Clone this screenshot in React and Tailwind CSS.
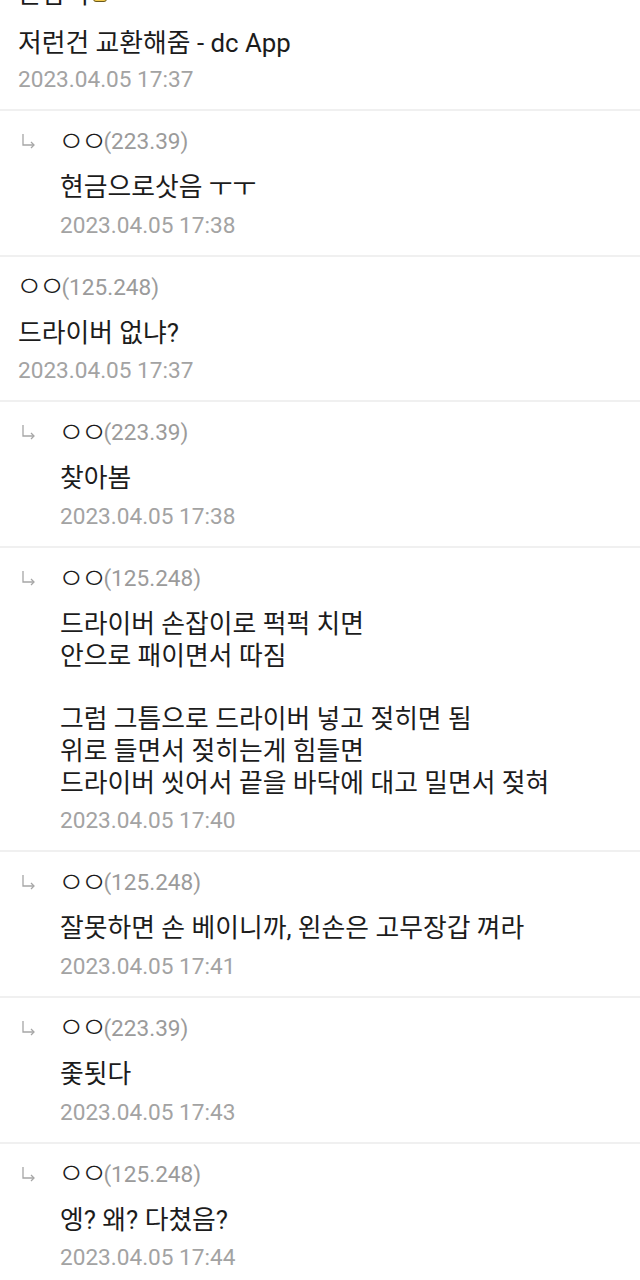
const comments = [
  { reply: true, name: "ㅇㅇ", ip: "223.39", lines: ["현금으로삿음 ㅜㅜ"], date: "2023.04.05 17:38" },
  { reply: false, name: "ㅇㅇ", ip: "125.248", lines: ["드라이버 없냐?"], date: "2023.04.05 17:37" },
  { reply: true, name: "ㅇㅇ", ip: "223.39", lines: ["찾아봄"], date: "2023.04.05 17:38" },
  {
    reply: true,
    name: "ㅇㅇ",
    ip: "125.248",
    lines: [
      "드라이버 손잡이로 퍽퍽 치면",
      "안으로 패이면서 따짐",
      "",
      "그럼 그틈으로 드라이버 넣고 젖히면 됨",
      "위로 들면서 젖히는게 힘들면",
      "드라이버 씻어서 끝을 바닥에 대고 밀면서 젖혀",
    ],
    date: "2023.04.05 17:40",
  },
  { reply: true, name: "ㅇㅇ", ip: "125.248", lines: ["잘못하면 손 베이니까, 왼손은 고무장갑 껴라"], date: "2023.04.05 17:41" },
  { reply: true, name: "ㅇㅇ", ip: "223.39", lines: ["좇됫다"], date: "2023.04.05 17:43" },
  { reply: true, name: "ㅇㅇ", ip: "125.248", lines: ["엥? 왜? 다쳤음?"], date: "2023.04.05 17:44" },
];

function ReplyArrow() {
  return (
    <svg width="15" height="15" viewBox="0 0 15 15" fill="none" stroke="#a6a6a6" strokeWidth="1.3">
      <path d="M2 0v11h11" />
      <path d="M10 8l3 3-3 3" />
    </svg>
  );
}

function Comment({ c }) {
  return (
    <div className="border-b-2 border-[#f0f0f0] pt-[15px] pb-[13px] flex">
      {c.reply && (
        <div className="w-[60px] shrink-0 pl-[21px] pt-[8px]">
          <ReplyArrow />
        </div>
      )}
      <div className={c.reply ? "" : "pl-[18px]"}>
        <div className="leading-8 h-8 text-[#1c1c1c] flex items-center">
          <span className="text-[29px] font-light leading-none tracking-[-4px] -ml-[2px]">{c.name}</span>
          <span className="text-[#9b9b9b]">({c.ip})</span>
        </div>
        <div className="mt-[14px] text-[25.8px] text-[#1c1c1c]">
          {c.lines.map((l, i) => (
            <div key={i} className="leading-[31.7px] h-[31.7px]">{l}</div>
          ))}
        </div>
        <div className="mt-[6px] leading-8 text-[#a3a3a3]">{c.date}</div>
      </div>
    </div>
  );
}

export default function App() {
  return (
    <div className="bg-white min-h-[1280px] text-[22.6px] font-['Roboto','Noto_Sans_CJK_KR',sans-serif] overflow-hidden">
      {/* cut-off first comment */}
      <div className="border-b-2 border-[#f0f0f0] pl-[18px] pb-[13px] -mt-[22px]">
        <div className="leading-8 text-[25.8px] text-[#1c1c1c] flex items-center">
          손잡이
          <span className="ml-1 inline-block w-[14px] h-[16px] rounded-[3px] bg-[#f2c94c] border border-[#6b5a1e]" />
        </div>
        <div className="mt-[17px] leading-8 text-[25.8px] text-[#1c1c1c]">저런건 교환해줌 - dc App</div>
        <div className="mt-[5px] leading-8 text-[#a3a3a3]">2023.04.05 17:37</div>
      </div>
      {comments.map((c, i) => (
        <Comment key={i} c={c} />
      ))}
    </div>
  );
}
